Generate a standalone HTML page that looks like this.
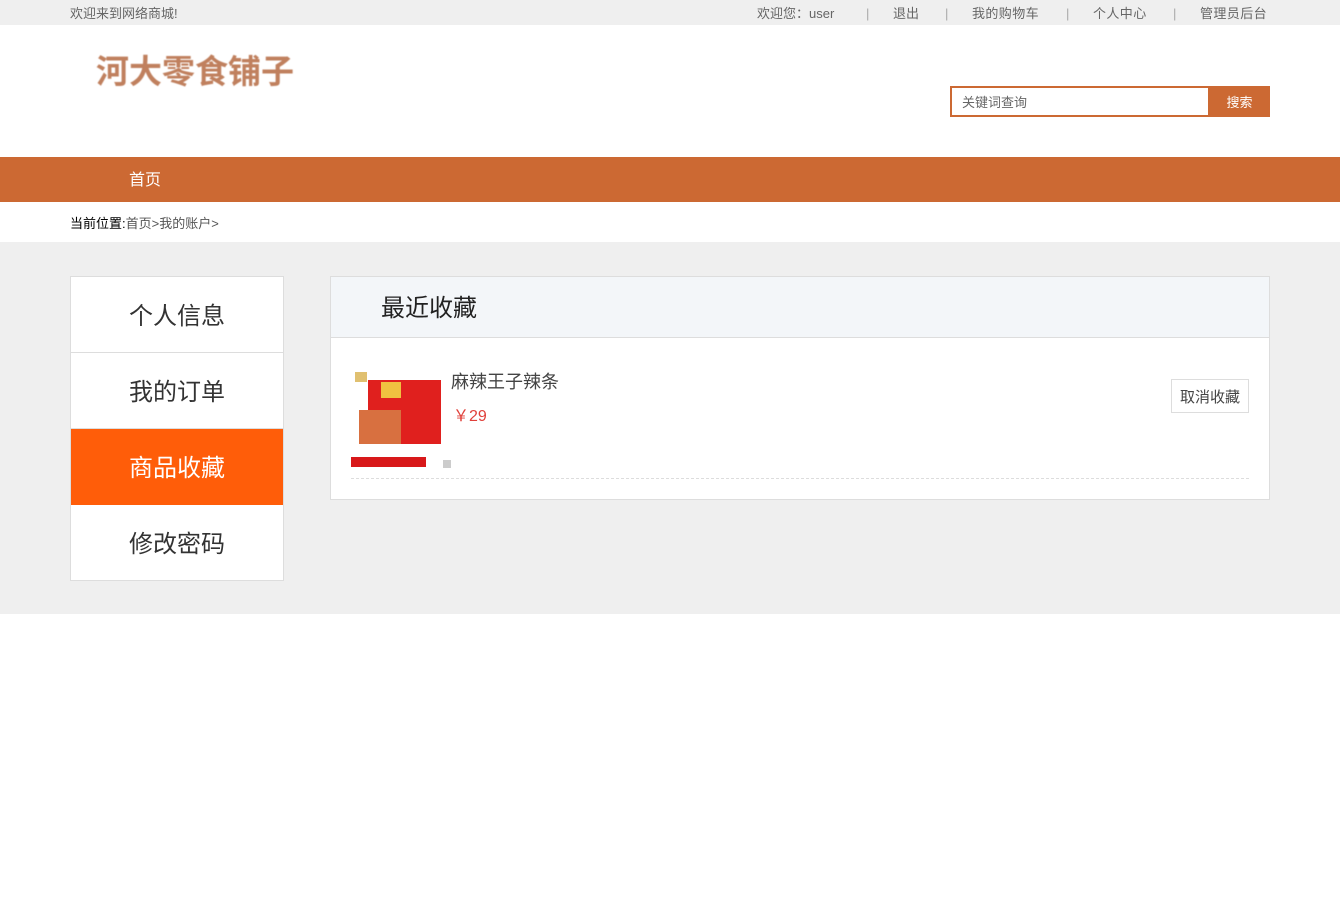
<!DOCTYPE html>
<html><head><meta charset="utf-8"><style>
*{margin:0;padding:0;box-sizing:border-box}
body{width:1340px;height:914px;background:#fff;font-family:"Liberation Sans","Noto Sans CJK SC",sans-serif;color:#333;position:relative;overflow:hidden}
.abs{position:absolute}
.top{left:0;top:0;width:1340px;height:25px;background:#efefef;font-size:13px;color:#666;line-height:27px}
.nav{left:0;top:157px;width:1340px;height:45px;background:#cc6933;color:#fff;font-size:16px;line-height:47px}
.main{left:0;top:242px;width:1340px;height:372px;background:#efefef}
.side{left:70px;top:276px;width:214px;height:305px;background:#fff;border:1px solid #ddd}
.side div{height:76px;line-height:80px;text-align:center;font-size:24px;color:#333;border-bottom:1px solid #ddd}
.panel{left:330px;top:276px;width:940px;height:224px;background:#fff;border:1px solid #ddd}
</style></head><body>
<div class="abs top">
<span class="abs" style="left:70px">欢迎来到网络商城!</span>
<span class="abs" style="left:757px">欢迎您：user</span>
<span class="abs" style="left:866px;color:#aaa">|</span>
<span class="abs" style="left:893px">退出</span>
<span class="abs" style="left:945px;color:#aaa">|</span>
<span class="abs" style="left:972px;letter-spacing:0.4px">我的购物车</span>
<span class="abs" style="left:1066px;color:#aaa">|</span>
<span class="abs" style="left:1093px;letter-spacing:0.4px">个人中心</span>
<span class="abs" style="left:1173px;color:#aaa">|</span>
<span class="abs" style="left:1200px;letter-spacing:0.4px">管理员后台</span>
</div>
<div class="abs" style="left:96px;top:45px;font-size:33px;font-weight:bold;color:#c0805e;letter-spacing:0;filter:blur(0.6px)">河大零食铺子</div>
<div class="abs" style="left:950px;top:86px;width:260px;height:31px;border:2px solid #cc6933;font-size:13px;color:#666;line-height:29px;padding-left:10px">关键词查询</div>
<div class="abs" style="left:1209px;top:86px;width:61px;height:31px;background:#cc6933;color:#fff;font-size:13px;line-height:33px;text-align:center">搜索</div>
<div class="abs nav"><span class="abs" style="left:129px">首页</span></div>
<div class="abs" style="left:70px;top:213px;font-size:13px;color:#555"><span style="color:#000">当前位置:</span>首页&gt;我的账户&gt;</div>
<div class="abs main"></div>
<div class="abs side">
<div>个人信息</div><div>我的订单</div><div style="background:#ff5d09;color:#fff;border-bottom-color:#ff5d09">商品收藏</div><div style="border:none">修改密码</div>
</div>
<div class="abs panel">
<div style="height:61px;background:#f3f6f9;border-bottom:1px solid #ddd;font-size:24px;color:#222;line-height:64px;padding-left:50px">最近收藏</div>
</div>
<div class="abs" style="left:351px;top:370px;width:90px;height:98px;background:#fff">
<div class="abs" style="left:4px;top:2px;width:12px;height:10px;background:#e0c070"></div>
<div class="abs" style="left:17px;top:10px;width:73px;height:64px;background:#e0201e"></div>
<div class="abs" style="left:30px;top:12px;width:20px;height:16px;background:#f0c040"></div>
<div class="abs" style="left:8px;top:40px;width:42px;height:34px;background:#d87040"></div>
<div class="abs" style="left:0;top:87px;width:75px;height:10px;background:#d8181a"></div>
</div>
<div class="abs" style="left:443px;top:460px;width:8px;height:8px;background:#ccc"></div>
<div class="abs" style="left:451px;top:368px;font-size:18px;color:#444">麻辣王子辣条</div>
<div class="abs" style="left:453px;top:402px;font-size:16px;color:#e0403a">￥29</div>
<div class="abs" style="left:1171px;top:379px;width:78px;height:34px;border:1px solid #ddd;font-size:15px;color:#444;line-height:36px;text-align:center">取消收藏</div>
<div class="abs" style="left:351px;top:478px;width:898px;border-top:1px dashed #ddd"></div>
</body></html>
